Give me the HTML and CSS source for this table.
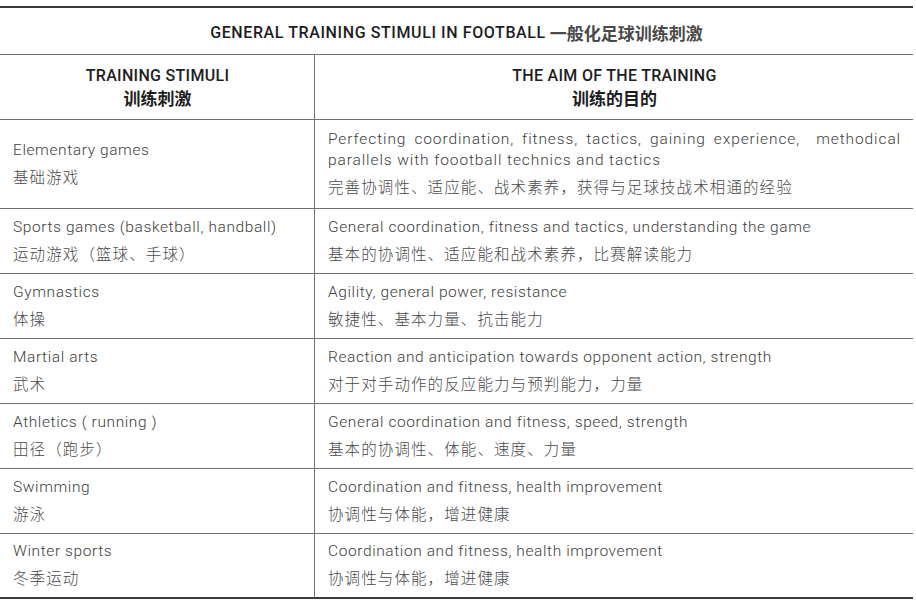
FILE: index.html
```html
<!DOCTYPE html>
<html lang="zh">
<head>
<meta charset="utf-8">
<title>General training stimuli in football</title>
<link rel="stylesheet" href="styles.css">
</head>
<body>
<div class="sheet">
  <div class="title">GENERAL TRAINING STIMULI IN FOOTBALL <span class="cn">一般化足球训练刺激</span></div>
  <div class="grid">
    <div class="cell head left"><div>TRAINING STIMULI</div><div class="cn">训练刺激</div></div>
    <div class="cell head"><div>THE AIM OF THE TRAINING</div><div class="cn">训练的目的</div></div>

    <div class="cell left"><div class="en">Elementary games</div><div class="cn">基础游戏</div></div>
    <div class="cell"><div class="en just">Perfecting coordination, fitness, tactics, gaining experience,&nbsp; methodical parallels with foootball technics and tactics</div><div class="cn">完善协调性、适应能、战术素养，获得与足球技战术相通的经验</div></div>

    <div class="cell left"><div class="en">Sports games (basketball, handball)</div><div class="cn">运动游戏（篮球、手球）</div></div>
    <div class="cell"><div class="en">General coordination, fitness and tactics, understanding the game</div><div class="cn">基本的协调性、适应能和战术素养，比赛解读能力</div></div>

    <div class="cell left"><div class="en">Gymnastics</div><div class="cn">体操</div></div>
    <div class="cell"><div class="en">Agility, general power, resistance</div><div class="cn">敏捷性、基本力量、抗击能力</div></div>

    <div class="cell left"><div class="en">Martial arts</div><div class="cn">武术</div></div>
    <div class="cell"><div class="en">Reaction and anticipation towards opponent action, strength</div><div class="cn">对于对手动作的反应能力与预判能力，力量</div></div>

    <div class="cell left"><div class="en">Athletics ( running )</div><div class="cn">田径（跑步）</div></div>
    <div class="cell"><div class="en">General coordination and fitness, speed, strength</div><div class="cn">基本的协调性、体能、速度、力量</div></div>

    <div class="cell left"><div class="en">Swimming</div><div class="cn">游泳</div></div>
    <div class="cell"><div class="en">Coordination and fitness, health improvement</div><div class="cn">协调性与体能，增进健康</div></div>

    <div class="cell left last"><div class="en">Winter sports</div><div class="cn">冬季运动</div></div>
    <div class="cell last"><div class="en">Coordination and fitness, health improvement</div><div class="cn">协调性与体能，增进健康</div></div>
  </div>
</div>
</body>
</html>
```
FILE: styles.css
```css
html, body {
  margin: 0;
  padding: 0;
  background: #ffffff;
}
body {
  font-family: Roboto, "Noto Sans CJK SC", sans-serif;
  color: #404040;
}
.sheet {
  width: 913px;
  margin-top: 6px;
  border-top: 2px solid #3a3a3a;
}
.title {
  height: 47px;
  box-sizing: border-box;
  display: flex;
  align-items: center;
  justify-content: center;
  font-size: 16px;
  font-weight: 500;
  color: #1e1e1e;
  letter-spacing: 0.6px;
  border-bottom: 1px solid #707070;
  padding-top: 2px;
}
.title .cn {
  font-family: "Noto Sans CJK SC", sans-serif;
  font-weight: 700;
  font-size: 17px;
  margin-left: 4px;
  letter-spacing: 0;
}
.grid {
  display: grid;
  grid-template-columns: 315px 1fr;
  grid-template-rows: 65px 89px repeat(6, 65px);
}
.cell {
  box-sizing: border-box;
  border-bottom: 1px solid #707070;
  display: flex;
  flex-direction: column;
  justify-content: center;
  padding: 0 12px 0 13px;
}
.cell.left {
  border-right: 1px solid #707070;
  padding-left: 13px;
}
.head {
  align-items: center;
  text-align: center;
  font-size: 16px;
  font-weight: 500;
  color: #1e1e1e;
  letter-spacing: 0.3px;
  padding-top: 2px;
}
.head .cn {
  font-family: "Noto Sans CJK SC", sans-serif;
  font-weight: 700;
  font-size: 17px;
  line-height: 26px;
  letter-spacing: 0;
  margin-top: 0;
  color: #1e1e1e;
}
.en {
  font-size: 15.5px;
  font-weight: 300;
  line-height: 21px;
  letter-spacing: 0.6px;
}
.just {
  text-align: justify;
  letter-spacing: 0.9px;
}
.cn {
  font-family: "Noto Sans CJK SC", sans-serif;
  font-size: 15.5px;
  font-weight: 300;
  line-height: 26px;
  letter-spacing: 1.1px;
  margin-top: 2px;
  color: #4a4a4a;
}
.last {
  border-bottom: 2px solid #3a3a3a;
}
```
